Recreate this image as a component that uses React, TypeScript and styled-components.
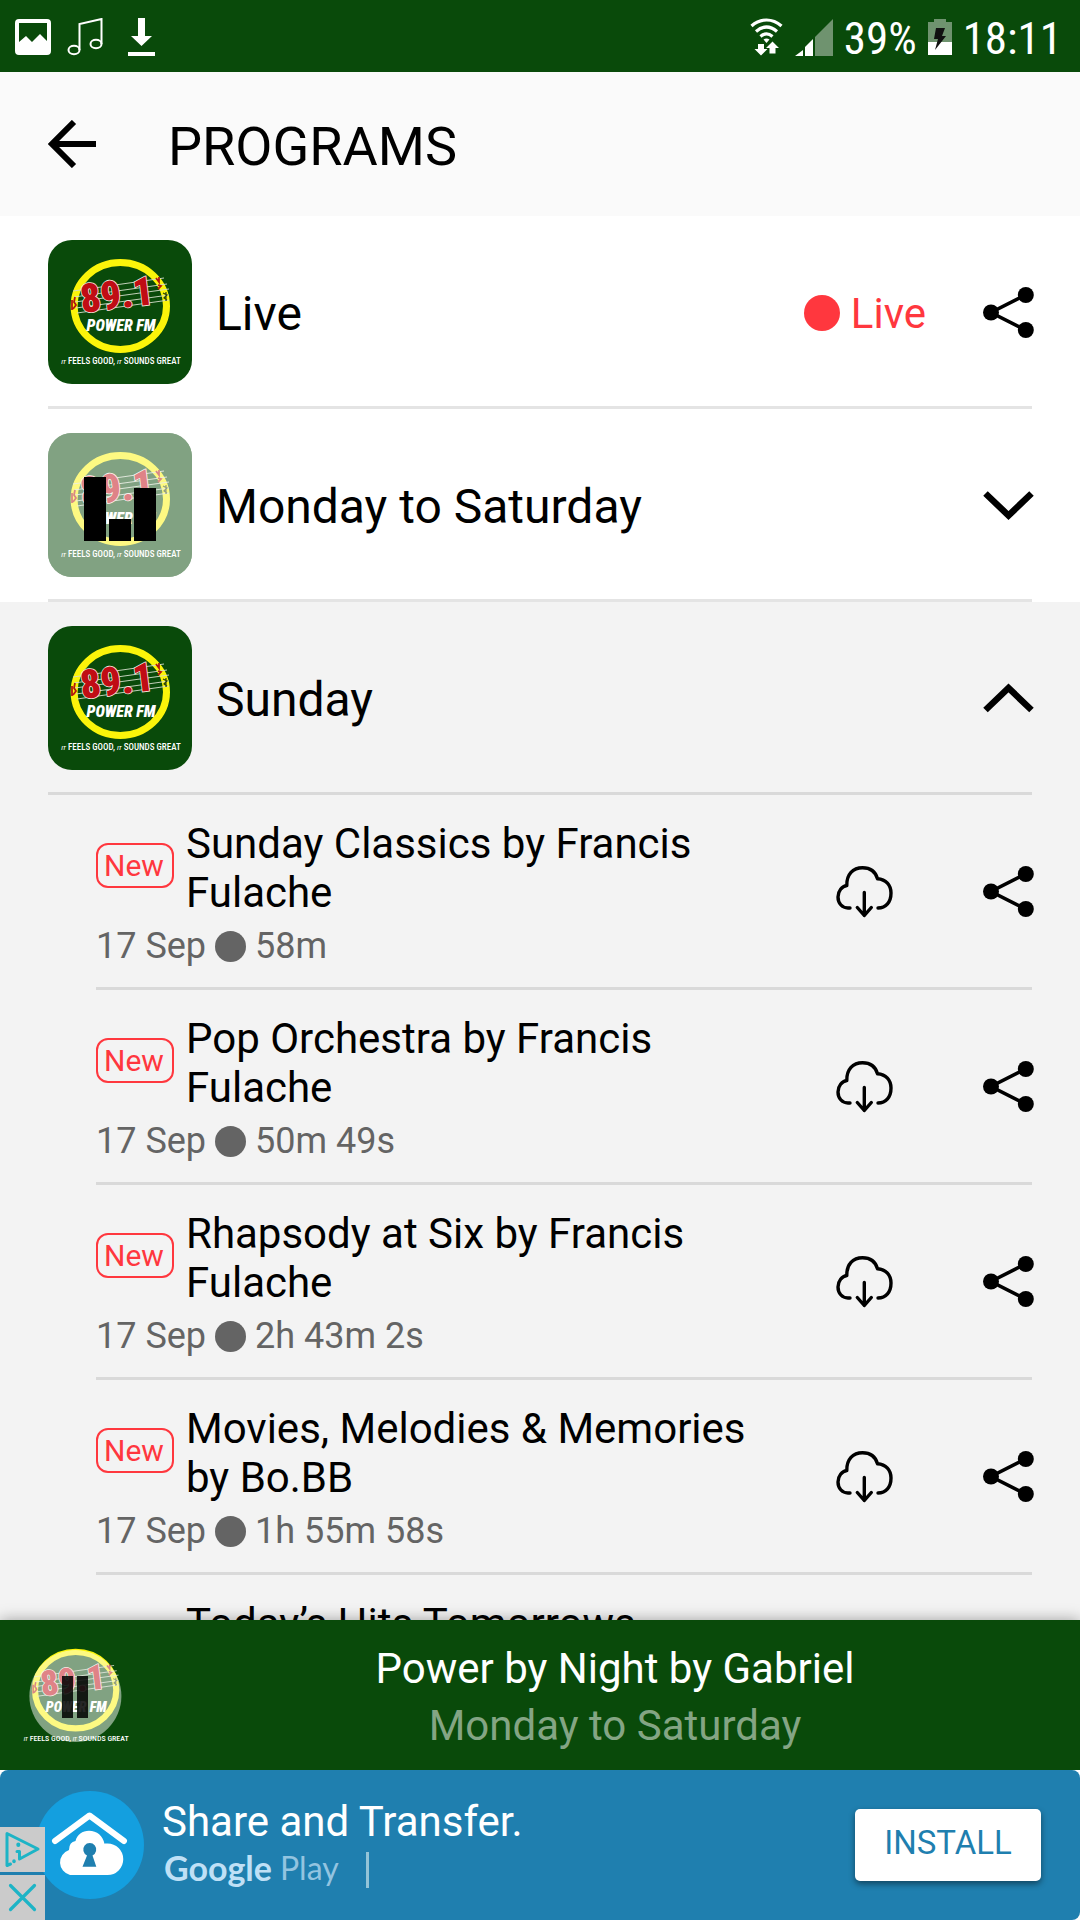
import React from 'react';
import styled, { createGlobalStyle } from 'styled-components';

const Global = createGlobalStyle`
  *, *::before, *::after { box-sizing: border-box; }
  body { margin: 0; background: #fff; font-family: Roboto, "Liberation Sans", sans-serif; color: #000; }
  h1, h2, p, ul { margin: 0; padding: 0; font-weight: 400; }
  ul { list-style: none; }
  button { font: inherit; color: inherit; background: none; border: 0; padding: 0; cursor: pointer; }
  svg { display: block; flex: none; }
`;

const green = '#094a0a';
const red = '#ff373e';
const condensed = '"Roboto Condensed", "Liberation Sans Narrow", Roboto, sans-serif';

const Screen = styled.div`
  height: 100vh;
  display: flex;
  flex-direction: column;
  overflow: hidden;
`;

const StatusBar = styled.div`
  flex: none;
  height: 72px;
  padding: 2px 18px 0 15px;
  background: ${green};
  color: #fff;
  display: flex;
  align-items: center;
  justify-content: space-between;
  font-family: ${condensed};
  font-size: 45px;
  line-height: 56px;
`;

const StatusGroup = styled.div<{ $gap: number }>`
  display: flex;
  align-items: center;
  gap: ${(p) => p.$gap}px;
`;

const StatusValue = styled.span`
  padding-top: 4px;
`;

const AppBar = styled.header`
  flex: none;
  height: 144px;
  background: #fafafa;
  display: flex;
  align-items: center;
`;

const IconButton = styled.button`
  flex: none;
  width: 144px;
  height: 144px;
  display: flex;
  align-items: center;
  justify-content: center;
`;

const Title = styled.h1`
  padding: 6px 0 0 24px;
  font-size: 54px;
  line-height: 64px;
`;

const List = styled.main`
  flex: 1;
  min-height: 0;
  overflow: hidden;
`;

const Section = styled.section<{ $open?: boolean }>`
  background: ${(p) => (p.$open ? '#f3f3f3' : '#fff')};
`;

const GroupRow = styled.div<{ $open?: boolean }>`
  height: 193px;
  padding: 0 0 1px 48px;
  display: flex;
  align-items: center;
  background: linear-gradient(${(p) => (p.$open ? '#d9d9d9, #d9d9d9' : '#e4e4e4, #e4e4e4')}) 48px 100% / calc(100% - 96px) 3px no-repeat;
`;

const GroupTitle = styled.h2`
  flex: 1;
  padding: 4px 0 0 24px;
  font-size: 48px;
  line-height: 56px;
`;

const LiveTag = styled.span`
  display: flex;
  align-items: center;
  gap: 11px;
  padding: 2px 10px 0 0;
  color: ${red};
  font-size: 42px;
  line-height: 49px;
`;

const Dot = styled.span<{ $size: number; $color: string }>`
  width: ${(p) => p.$size}px;
  height: ${(p) => p.$size}px;
  border-radius: 50%;
  background: ${(p) => p.$color};
`;

const Episode = styled.li`
  height: 195px;
  padding: 0 0 3px 96px;
  display: flex;
  align-items: center;
  background: linear-gradient(#d9d9d9, #d9d9d9) 96px 100% / calc(100% - 144px) 3px no-repeat;
`;

const EpisodeBody = styled.div`
  flex: 1;
  align-self: flex-start;
  padding-top: 24px;
`;

const EpisodeHead = styled.div`
  display: grid;
  grid-template-columns: 78px 1fr;
  column-gap: 12px;
`;

const Badge = styled.span`
  height: 45px;
  margin-top: 24px;
  padding-left: 6px;
  border: 2px solid ${red};
  border-radius: 12px;
  color: ${red};
  font-size: 30px;
  line-height: 42px;
`;

const EpisodeTitle = styled.p`
  grid-column: 2;
  font-size: 42px;
  line-height: 49px;
`;

const Meta = styled.p`
  display: flex;
  align-items: center;
  gap: 9px;
  padding-top: 8px;
  color: #646464;
  font-size: 36px;
  line-height: 42px;
`;

const Player = styled.footer`
  flex: none;
  position: relative;
  height: 150px;
  background: ${green};
  box-shadow: 0 0 14px rgba(0, 0, 0, 0.35);
  display: flex;
  align-items: center;
`;

const PlayerButton = styled.button`
  flex: none;
  width: 150px;
  height: 150px;
  display: flex;
  align-items: center;
  justify-content: center;
`;

const PlayerText = styled.div`
  flex: 1;
  padding-top: 4px;
  text-align: center;
  color: #fff;
  font-size: 42px;
  line-height: 57px;
`;

const PlayerSub = styled.p`
  color: #84a584;
`;

const AdBackdrop = styled.aside`
  flex: none;
  position: relative;
  height: 150px;
  background: #fff;
`;

const Ad = styled.div`
  height: 150px;
  padding: 0 39px 0 36px;
  border-radius: 8px;
  background: #1f7faf;
  color: #fff;
  display: flex;
  align-items: center;
`;

const AdText = styled.div`
  flex: 1;
  padding-left: 18px;
`;

const AdTitle = styled.p`
  font-size: 42px;
  line-height: 49px;
`;

const Store = styled.p`
  display: flex;
  align-items: center;
  height: 48px;
  color: #bfe0f6;
  font-family: Lato, sans-serif;
  line-height: 44px;
`;

const GoogleWord = styled.b`
  padding: 0 0 4px 2px;
  font-size: 34px;
  font-weight: 700;
`;

const PlayWord = styled.span`
  padding: 0 0 4px 8px;
  font-size: 32px;
  color: #93c4e0;
`;

const StoreRule = styled.span`
  width: 3px;
  height: 36px;
  margin-left: 27px;
  background: #93c4d8;
`;

const Install = styled.button`
  && {
    width: 186px;
    height: 72px;
    border-radius: 5px;
    background: #fff;
    color: #1f7faf;
    font-size: 33px;
    line-height: 68px;
    padding-bottom: 4px;
    box-shadow: 0 3px 6px rgba(0, 0, 0, 0.45);
  }
`;

const AdControls = styled.div`
  position: absolute;
  left: 0;
  bottom: 0;
  display: grid;
  gap: 3px;
`;

const AdControl = styled.button`
  && {
    width: 45px;
    height: 45px;
    background: #cbcbcb;
  }
`;

const Artwork = styled.svg`
  border-radius: 24px;
`;

const LogoText = styled.text`
  font-family: ${condensed};
`;

function LogoMark() {
  return (
    <>
      <ellipse cx="72.300" cy="66" rx="46.200" ry="43.500" fill="none" stroke="#fbf40a" strokeWidth="7" />
      <path d="M25 51 116 38M26 57 119 44M27 62 121 49M28 68 121 55M29 73 121 60" stroke="#d5dccb" strokeWidth="0.900" fill="none" />
      <path d="M24 60v10M27 57l-1 5 2 3-3 4M108 38l3 4 0-5M110 45l3 1-3 3" stroke="#b3170f" strokeWidth="1.800" fill="none" />
      <path d="M115 53l4 2-3 3 3 2M118 52v9" stroke="#28400c" strokeWidth="1.200" fill="none" />
      <LogoText x="34" y="73" fontSize="40" fontWeight="900" fill="#c00d14" stroke="#f3e6df" strokeWidth="1.600" paintOrder="stroke" transform="rotate(-7 34 73)">89.1</LogoText>
      <LogoText x="73" y="91" fontSize="16" fontWeight="900" fontStyle="italic" textAnchor="middle" fill="#fff">POWER FM</LogoText>
      <LogoText x="73" y="124" fontSize="9" fontWeight="500" textAnchor="middle" fill="#fff">
        <tspan fontStyle="italic" fontSize="6">IT</tspan> FEELS GOOD, <tspan fontStyle="italic" fontSize="6">IT</tspan> SOUNDS GREAT
      </LogoText>
    </>
  );
}

function StationArt({ playing }: { playing?: boolean }) {
  return (
    <Artwork width="144" height="144" viewBox="0 0 144 144" role="img" aria-label="89.1 Power FM">
      <rect width="144" height="144" fill={green} />
      <LogoMark />
      {playing && (
        <>
          <rect width="144" height="144" fill="#fff" opacity="0.49" />
          <path d="M36 44h22v64H36zM61 86h22v22H61zM86 55h22v53H86z" />
        </>
      )}
    </Artwork>
  );
}

const ShareIcon = () => (
  <svg width="52" height="52" viewBox="0 0 52 52">
    <path d="M43.500 9 9 26.500 43.500 44" fill="none" stroke="#000" strokeWidth="3.600" />
    <circle cx="9" cy="26.500" r="8" />
    <circle cx="43.800" cy="9" r="8" />
    <circle cx="43.800" cy="44" r="8" />
  </svg>
);

const ChevronIcon = ({ up }: { up?: boolean }) => (
  <svg width="52" height="52" viewBox="0 0 52 52">
    <path d={up ? 'M3.500 38 26.500 16 49.500 38' : 'M3.500 14.500 26.500 36.500 49.500 14.500'} fill="none" stroke="#000" strokeWidth="6.500" />
  </svg>
);

const CloudIcon = () => (
  <svg width="58" height="54" viewBox="0 0 58 54" fill="none" stroke="#000" strokeWidth="3.400" strokeLinecap="round" strokeLinejoin="round">
    <path d="M15 44H13C7 44 3 39 3 33c0-6 4-10.800 8.800-11.500C11.500 10.500 18 3.700 27.500 3.700c7.500 0 13 4 15 11C51 15.200 56 21.500 56 29c0 9-5 15-13 15" />
    <path d="M29.300 28.500V51.500M22.300 43.500l7 8 7-8" />
  </svg>
);

const BackIcon = () => (
  <svg width="48" height="48" viewBox="0 0 48 48" fill="none" stroke="#000" strokeWidth="6">
    <path d="M48 24H4M26 2 4 24 26 46" />
  </svg>
);

const AppIcon = () => (
  <svg width="108" height="108" viewBox="0 0 108 108">
    <circle cx="54" cy="54" r="54" fill="#149fdf" />
    <path d="M19 50 53.500 24.500 88 50" fill="none" stroke="#fff" strokeWidth="6" strokeLinecap="round" strokeLinejoin="round" />
    <path d="M34 84a13 13 0 0 1-1-25q0-8 6.500-9C41 43.500 46.500 39.700 53 39.700c8 0 14 5.300 15.500 13 1-.5 2-.2 3-.2a15.700 15.700 0 0 1 0 31.500z" fill="#fff" />
    <path d="M51 64.500a6.500 6.500 0 1 1 5.500 0l3.800 11.300H46.500z" fill="#1f7faf" />
  </svg>
);

const AdChoicesIcon = () => (
  <svg width="45" height="45" viewBox="0 0 45 45" fill="none" stroke="#1db4c6" strokeWidth="3" strokeLinejoin="round" strokeLinecap="round">
    <path d="M10.500 37 7 38.500V6.500L38 22 19.500 32V24.500H17" />
    <path d="M18.300 17.500v.5" strokeWidth="4" />
    <path d="M14 34v.5" strokeWidth="3.500" />
  </svg>
);

const CloseIcon = () => (
  <svg width="45" height="45" viewBox="0 0 45 45" stroke="#1db4c6" strokeWidth="3.200" strokeLinecap="round">
    <path d="M10.500 10.500 34.500 34.500M34.500 10.500 10.500 34.500" />
  </svg>
);

const episodes = [
  ['Sunday Classics by Francis Fulache', '58m'],
  ['Pop Orchestra by Francis Fulache', '50m 49s'],
  ['Rhapsody at Six by Francis Fulache', '2h 43m 2s'],
  ['Movies, Melodies & Memories by Bo.BB', '1h 55m 58s'],
];

export default function App() {
  return (
    <Screen>
      <Global />
      <StatusBar>
        <StatusGroup $gap={16}>
          <svg width="36" height="36" viewBox="0 0 36 36">
            <path fillRule="evenodd" fill="#fff" d="M4 0h28a4 4 0 0 1 4 4v28a4 4 0 0 1-4 4H4a4 4 0 0 1-4-4V4a4 4 0 0 1 4-4zM4 4v19l7-6 6 6 8-8 7 7V4z" />
          </svg>
          <svg width="38" height="38" viewBox="0 0 38 38" fill="none" stroke="#fff" strokeWidth="2">
            <ellipse cx="7" cy="32" rx="5.500" ry="4.300" />
            <ellipse cx="29" cy="26" rx="5.500" ry="4.300" />
            <path d="M12.500 32V6L34.500 1v25" />
          </svg>
          <svg width="42" height="40" viewBox="0 0 42 40" fill="#fff">
            <path d="M17 1h7v18h7L20.500 29 10 19h7zM7 35h27v4H7z" />
          </svg>
        </StatusGroup>
        <StatusGroup $gap={11}>
          <svg width="34" height="40" viewBox="0 0 34 40" fill="none" stroke="#fff" strokeWidth="3.200">
            <path d="M1.500 9c9-8 21-8 30 0M6 14.500c7-6 14-6 21 0M10.500 19.500c4-3.500 8-3.500 12 0" />
            <path d="M16.500 26l-3-3.500q3-2 6 0z" fill="#fff" stroke="none" />
            <path d="M8 27h6v5h3.500L11 38.500 4.500 32H8zM19.500 36.500V31H16l6.500-6.500L29 31h-3.500v5.500z" fill="#fff" stroke="none" />
          </svg>
          <svg width="38" height="38" viewBox="0 0 38 38">
            <path d="M0 38h8v-6zM10 38h8V21l-8 8z" fill="#fff" />
            <path d="M20 38V19L38 1v37z" fill="#6f936f" />
          </svg>
          <StatusValue>39%</StatusValue>
          <svg width="24" height="36" viewBox="0 0 24 36">
            <path d="M0 3h6V0h12v3h6v20H0z" fill="#6f936f" />
            <path d="M0 23h24v13H0z" fill="#fff" />
            <path d="M8 9h9l-3 8h4L7 31l3-11H6z" fill="#111" />
          </svg>
          <StatusValue>18:11</StatusValue>
        </StatusGroup>
      </StatusBar>

      <AppBar>
        <IconButton aria-label="Back"><BackIcon /></IconButton>
        <Title>PROGRAMS</Title>
      </AppBar>

      <List>
        <Section>
          <GroupRow>
            <StationArt />
            <GroupTitle>Live</GroupTitle>
            <LiveTag><Dot $size={36} $color={red} />Live</LiveTag>
            <IconButton aria-label="Share"><ShareIcon /></IconButton>
          </GroupRow>
        </Section>
        <Section>
          <GroupRow>
            <StationArt playing />
            <GroupTitle>Monday to Saturday</GroupTitle>
            <IconButton aria-label="Expand"><ChevronIcon /></IconButton>
          </GroupRow>
        </Section>
        <Section $open>
          <GroupRow $open>
            <StationArt />
            <GroupTitle>Sunday</GroupTitle>
            <IconButton aria-label="Collapse"><ChevronIcon up /></IconButton>
          </GroupRow>
          <ul>
            {episodes.map(([name, length]) => (
              <Episode key={name}>
                <EpisodeBody>
                  <EpisodeHead>
                    <Badge>New</Badge>
                    <EpisodeTitle>{name}</EpisodeTitle>
                  </EpisodeHead>
                  <Meta>17 Sep <Dot $size={31} $color="#646464" /> {length}</Meta>
                </EpisodeBody>
                <IconButton aria-label="Download"><CloudIcon /></IconButton>
                <IconButton aria-label="Share"><ShareIcon /></IconButton>
              </Episode>
            ))}
            <Episode>
              <EpisodeBody>
                <EpisodeHead>
                  <EpisodeTitle>Today’s Hits Tomorrows</EpisodeTitle>
                </EpisodeHead>
              </EpisodeBody>
            </Episode>
          </ul>
        </Section>
      </List>

      <Player>
        <PlayerButton aria-label="Pause">
          <svg width="126" height="126" viewBox="0 0 126 126">
            <g transform="scale(0.88)"><LogoMark /></g>
            <circle cx="63.400" cy="64" r="46" fill="#fff" opacity="0.49" />
            <path d="M50 44h11v42H50zM65 44h11v42H65z" opacity="0.85" />
          </svg>
        </PlayerButton>
        <PlayerText>
          <p>Power by Night by Gabriel</p>
          <PlayerSub>Monday to Saturday</PlayerSub>
        </PlayerText>
      </Player>

      <AdBackdrop>
        <Ad>
          <AppIcon />
          <AdText>
            <AdTitle>Share and Transfer.</AdTitle>
            <Store><GoogleWord>Google</GoogleWord><PlayWord>Play</PlayWord><StoreRule /></Store>
          </AdText>
          <Install>INSTALL</Install>
        </Ad>
        <AdControls>
          <AdControl aria-label="Ad choices"><AdChoicesIcon /></AdControl>
          <AdControl aria-label="Close ad"><CloseIcon /></AdControl>
        </AdControls>
      </AdBackdrop>
    </Screen>
  );
}
